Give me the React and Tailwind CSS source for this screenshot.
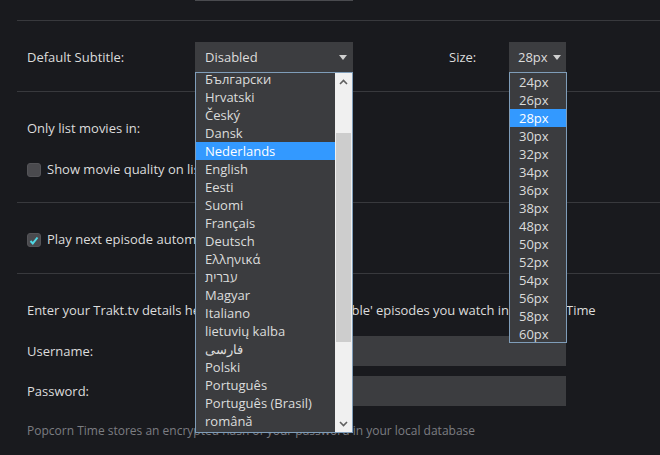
import React from "react";

const languages = [
  "Български",
  "Hrvatski",
  "Český",
  "Dansk",
  "Nederlands",
  "English",
  "Eesti",
  "Suomi",
  "Français",
  "Deutsch",
  "Ελληνικά",
  "עברית",
  "Magyar",
  "Italiano",
  "lietuvių kalba",
  "فارسی",
  "Polski",
  "Português",
  "Português (Brasil)",
  "română",
];

const sizes = ["24px", "26px", "28px", "30px", "32px", "34px", "36px", "38px", "48px", "50px", "52px", "54px", "56px", "58px", "60px"];

const Caret = () => (
  <svg width="8" height="5" viewBox="0 0 8 5" className="shrink-0">
    <path d="M0 0h8L4 5z" fill="#d0d0d0" />
  </svg>
);

const Checkbox = ({ checked }) => (
  <span className="w-[14px] h-[14px] rounded-[3px] bg-[#4a4a4e] border border-[#545458] flex items-center justify-center shrink-0">
    {checked && (
      <svg width="10" height="9" viewBox="0 0 10 9">
        <path d="M1.5 5l2.3 2.4L8.5 1.5" stroke="#4fd9e6" strokeWidth="2" fill="none" />
      </svg>
    )}
  </span>
);

const App = () => {
  return (
    <div
      className="w-[660px] h-[455px] bg-[#191a1e] text-[#dcdcdc] text-[13px] overflow-hidden"
      style={{ fontFamily: '"Open Sans", "Noto Sans", sans-serif' }}
    >
      <div className="pl-[17px]">
        {/* Top leftover input */}
        <div className="h-[20px]">
          <div className="ml-[178px] w-[158px] h-[1px] bg-[#4a4b4f]"></div>
        </div>

        {/* Subtitle section */}
        <div className="border-t border-[#38393d] pt-[21px] pb-[19px] pl-[10px]">
          <div className="flex items-center h-[30px]">
            <span className="w-[168px] pt-px">Default Subtitle:</span>
            <div className="relative w-[158px] h-[30px] bg-[#3c3d40] flex items-center justify-between pl-[10px] pr-[6px]">
              <span className="pt-px">Disabled</span>
              <Caret />
              {/* Language dropdown */}
              <div className="absolute z-20 left-0 top-[30px] w-[158px] h-[361px] border border-[#7f9db9] bg-[#3b3c3f] flex overflow-hidden">
                <div className="flex-1 overflow-hidden">
                  <div className="-mt-[3px]">
                    {languages.map((l) => (
                      <div
                        key={l}
                        className={
                          "h-[18px] leading-[18px] pl-[9px] whitespace-nowrap " +
                          (l === "Nederlands" ? "bg-[#3399ff] text-white" : "")
                        }
                      >
                        {l}
                      </div>
                    ))}
                  </div>
                </div>
                <div className="w-[17px] bg-[#f0f0f0] flex flex-col">
                  <div className="h-[17px] flex items-center justify-center">
                    <svg width="9" height="6" viewBox="0 0 9 6">
                      <path d="M1 5l3.5-3.5L8 5" stroke="#606060" strokeWidth="1.6" fill="none" />
                    </svg>
                  </div>
                  <div className="h-[43px]"></div>
                  <div className="mx-[1px] h-[209px] bg-[#cdcdcd]"></div>
                  <div className="flex-1"></div>
                  <div className="h-[17px] flex items-center justify-center">
                    <svg width="9" height="6" viewBox="0 0 9 6">
                      <path d="M1 1l3.5 3.5L8 1" stroke="#606060" strokeWidth="1.6" fill="none" />
                    </svg>
                  </div>
                </div>
              </div>
            </div>
            <span className="ml-[96px] w-[60px] pt-px">Size:</span>
            <div className="relative w-[57px] h-[30px] bg-[#3c3d40] flex items-center justify-between pl-[9px] pr-[5px]">
              <span className="pt-px">28px</span>
              <Caret />
              {/* Size dropdown */}
              <div className="absolute z-20 left-0 top-[30px] w-[58px] h-[271px] border border-[#7f9db9] bg-[#3b3c3f] overflow-hidden">
                {sizes.map((s) => (
                  <div
                    key={s}
                    className={
                      "h-[18px] leading-[18px] pl-[9px] " + (s === "28px" ? "bg-[#3399ff] text-white" : "")
                    }
                  >
                    {s}
                  </div>
                ))}
              </div>
            </div>
          </div>
        </div>

        {/* Movie list section */}
        <div className="border-t border-[#38393d] h-[111px] pl-[10px] pt-[27px]">
          <div className="flex items-center h-[20px]">
            <span className="w-[168px]">Only list movies in:</span>
            <div className="w-[150px] h-[30px] bg-[#3c3d40]"></div>
          </div>
          <div className="flex items-center gap-[6px] h-[20px] mt-[21px]">
            <Checkbox />
            <span>Show movie quality on list</span>
          </div>
        </div>

        {/* Play next section */}
        <div className="border-t border-[#38393d] h-[71px] pl-[10px] pt-[27px]">
          <div className="flex items-center gap-[6px] h-[20px]">
            <Checkbox checked />
            <span>Play next episode automatically</span>
          </div>
        </div>

        {/* Trakt section */}
        <div className="border-t border-[#38393d] pl-[10px] pt-[26px]">
          <div className="h-[20px] leading-[20px] whitespace-nowrap tracking-[-0.05px]">
            Enter your Trakt.tv details here to automatically 'scrobble' episodes you watch in Popcorn Time
          </div>
          <div className="flex items-center mt-[16px]">
            <span className="w-[168px] pt-px">Username:</span>
            <div className="w-[371px] h-[30px] bg-[#3c3d40]"></div>
          </div>
          <div className="flex items-center mt-[10px]">
            <span className="w-[168px] pt-px">Password:</span>
            <div className="w-[371px] h-[30px] bg-[#3c3d40]"></div>
          </div>
          <div className="mt-[15px] h-[20px] leading-[20px] text-[12px] text-[#7c7d82] whitespace-nowrap">
            Popcorn Time stores an encrypted hash of your password in your local database
          </div>
        </div>
      </div>
    </div>
  );
};

export default App;
